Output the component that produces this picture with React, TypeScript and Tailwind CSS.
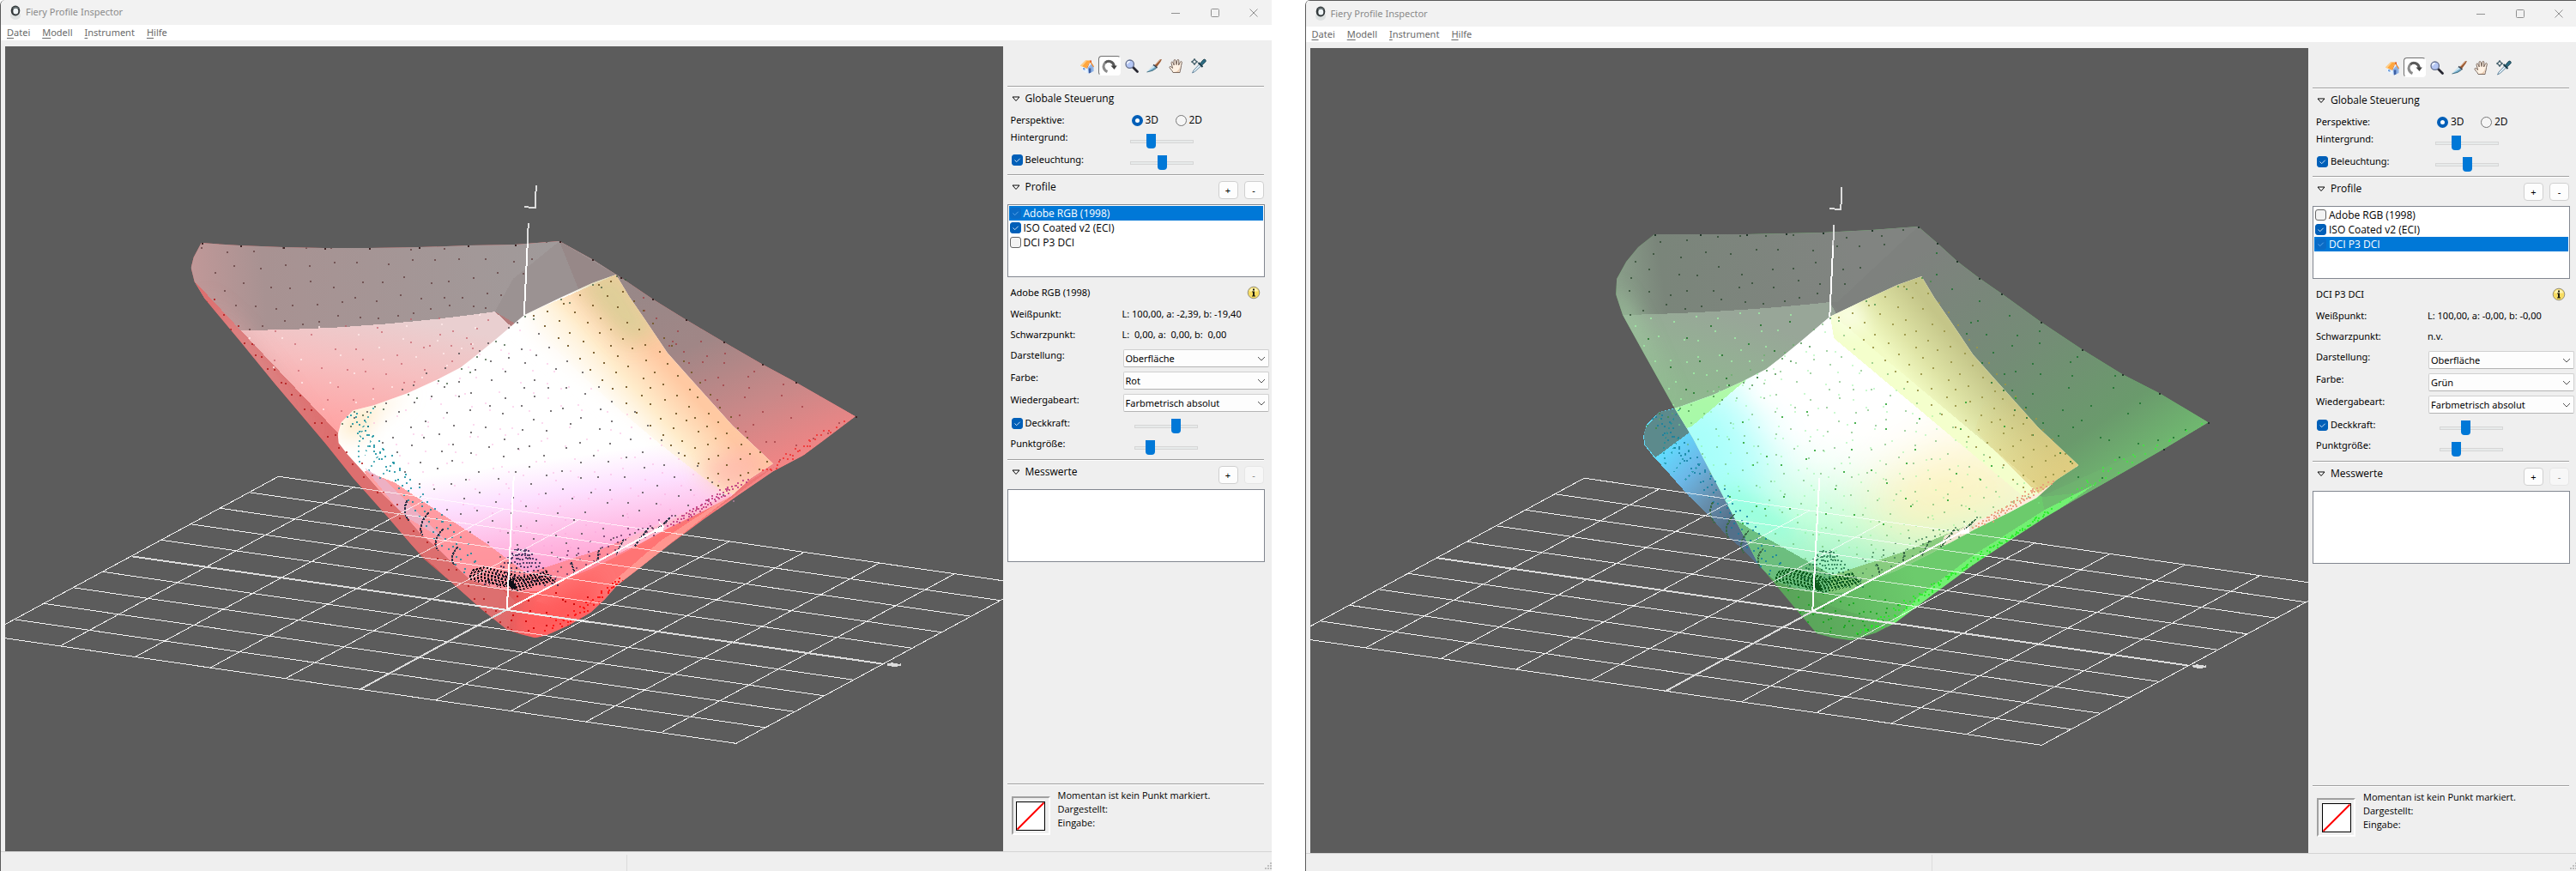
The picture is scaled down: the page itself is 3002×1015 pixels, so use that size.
import React, { useId, useState } from "react";

type Pt = [number, number];

/* ---------- geometry helpers for the 3D view ---------- */

const noise = (n: number) => {
  const s = Math.sin(n * 127.1 + 11.7) * 43758.5453;
  return s - Math.floor(s);
};

const toPath = (pts: Pt[]) => "M" + pts.map((p) => p.join(" ")).join("L") + "Z";

/* Sample points laid over a four-cornered patch (a, b along the top, d, c along the bottom). */
const patch = (a: Pt, b: Pt, c: Pt, d: Pt, nu: number, nv: number, jitter: number, seed: number): Pt[] => {
  const out: Pt[] = [];
  for (let i = 0; i <= nu; i++) {
    for (let j = 0; j <= nv; j++) {
      const u = i / nu;
      const v = j / nv;
      const k = seed + i * 31 + j * 7;
      const x = (1 - v) * ((1 - u) * a[0] + u * b[0]) + v * ((1 - u) * d[0] + u * c[0]);
      const y = (1 - v) * ((1 - u) * a[1] + u * b[1]) + v * ((1 - u) * d[1] + u * c[1]);
      out.push([Math.round(x + (noise(k) - 0.5) * jitter), Math.round(y + (noise(k + 0.5) - 0.5) * jitter)]);
    }
  }
  return out;
};

const dotPath = (pts: Pt[]) => pts.map(([x, y]) => `M${x} ${y}h2v2h-2z`).join("");

const Dots = ({ pts, fill, opacity = 1 }: { pts: Pt[]; fill: string; opacity?: number }) => (
  <path d={dotPath(pts)} fill={fill} opacity={opacity} />
);

const ISO: Pt[] = [
  [611, 367], [653, 347], [690, 330], [718, 320], [733, 345], [749, 368], [778, 411], [802, 438], [854, 496],
  [901, 540], [875, 557], [852, 578], [820, 595], [781, 614], [730, 642], [690, 662], [655, 676], [630, 688],
  [608, 689], [575, 684], [548, 675], [532, 660], [510, 638], [492, 623], [472, 600], [447, 576], [425, 551],
  [405, 529], [395, 516], [394, 506], [398, 492], [412, 478], [436, 472], [475, 458], [510, 442], [537, 428],
  [555, 414], [577, 396],
];

const ADOBE: Pt[] = [
  [235, 283], [280, 286], [330, 288], [378, 289], [430, 289], [488, 288], [545, 286], [600, 285], [652, 281],
  [690, 302], [723, 323], [760, 348], [799, 372], [843, 398], [888, 424], [927, 445], [997, 485], [960, 513],
  [937, 530], [901, 549], [860, 577], [820, 605], [781, 634], [745, 662], [719, 682], [705, 698], [689, 713],
  [664, 728], [637, 740], [624, 743], [608, 739], [592, 734], [563, 711], [527, 679], [493, 650], [452, 602],
  [412, 557], [380, 517], [320, 446], [280, 397], [239, 348], [227, 328], [223, 312], [226, 300],
];

const DCI: Pt[] = [
  [407, 271], [460, 271], [514, 271], [560, 270], [603, 269], [660, 266], [714, 262], [736, 281], [759, 302],
  [785, 322], [811, 340], [857, 373], [905, 405], [952, 434], [995, 456], [1052, 490], [1000, 521], [934, 559],
  [897, 580], [863, 600], [820, 628], [778, 656], [732, 690], [688, 723], [665, 735], [636, 744], [615, 741],
  [596, 736], [572, 708], [528, 655], [490, 582], [452, 509], [429, 471], [396, 412], [370, 365], [362, 341],
  [363, 323], [374, 303], [388, 286],
];

const isoWhite = patch([606, 376], [846, 572], [612, 676], [412, 486], 13, 11, 10, 3);
const isoSide = patch([620, 368], [714, 324], [896, 538], [838, 566], 5, 16, 6, 90);
const isoSoft = patch([600, 392], [846, 580], [640, 662], [440, 500], 14, 9, 18, 410);
const isoRim = patch([404, 486], [416, 484], [556, 650], [538, 666], 3, 22, 6, 55);
const isoHalo = patch([600, 640], [614, 640], [650, 680], [565, 680], 11, 8, 2, 5);
const isoEdge = patch([848, 566], [872, 558], [800, 604], [776, 612], 3, 16, 3, 17);
const isoLow = patch([650, 645], [780, 600], [760, 620], [650, 674], 10, 3, 7, 44);
const isoOutline = ISO.slice(0, 4)
  .concat(ISO.slice(30))
  .flatMap(([x, y], i): Pt[] => [[x, y + 1], [x + 10, y + 4 + (i % 2)]]);

/* Dense strands of near-black samples around the black point. */
const strands: string[] = [];
for (let i = 0; i < 13; i++) {
  const x = 549 + i * 4;
  const top = 660 + Math.abs(i - 3) * 1;
  strands.push(`M${x + 4} ${top}Q${x - 3} ${top + 8} ${x + 1 + i / 3} ${676 + i}`);
}
for (let i = 0; i < 12; i++) {
  strands.push(`M${594 + i * 4} ${674 - Math.round(i * 0.8)}Q${602 + i * 3} ${678 - i} ${603 + i * 4} ${689 - i}`);
}
const longStrands = [
  "M475 583Q468 596 477 607", "M500 597Q486 612 493 624", "M517 616Q503 630 511 642", "M534 637Q523 648 530 659",
  "M727 628L718 646", "M756 615L740 636", "M698 641L696 657", "M666 655L670 668", "M781 603L763 620",
];
const looseStrands = ["M460 538L442 558", "M447 522L430 548", "M435 508L425 530", "M436 475Q412 510 420 540"];

const gridLines: string[] = [];
for (let i = 0; i <= 10; i++) {
  gridLines.push(`M${325 + 87.5 * i} ${555 + 12.6 * i}l-342 185`);
  gridLines.push(`M${325 - 34.2 * i} ${555 + 18.5 * i}l875 126`);
}

const IsoDots = ({ green }: { green: boolean }) => {
  const dark = green ? "#0c5a1c" : "#101018";
  return (
    <g>
      <Dots pts={isoSoft} fill={green ? "#7ef08a" : "#f8a0d8"} opacity={0.4} />
      <Dots pts={isoWhite} fill={green ? "#5fae60" : "#4f4a4c"} opacity={green ? 0.55 : 0.75} />
      <Dots pts={isoSide} fill={green ? "#9a9648" : "#745828"} opacity={0.9} />
      <Dots pts={isoRim} fill={green ? "#1180a0" : "#0a8a9c"} opacity={0.8} />
      <Dots pts={isoOutline} fill={green ? "#3c8a40" : "#3c5a3c"} opacity={0.7} />
      <Dots pts={isoEdge} fill={green ? "#e89a78" : "#c03a80"} opacity={0.85} />
      <Dots pts={isoLow} fill={green ? "#3a7a50" : "#5a2a58"} opacity={0.7} />
      <Dots pts={isoHalo} fill={green ? "#1d7048" : "#1d1d48"} opacity={0.75} />
      <path d={looseStrands.join("")} fill="none" stroke="#12909c" strokeOpacity="0.7" strokeWidth="2" strokeDasharray="2 4" />
      <path d={longStrands.join("")} fill="none" stroke={green ? "#3a6a48" : "#2c3448"} strokeWidth="2" strokeDasharray="3 1" />
      <path d={strands.join("")} fill="none" stroke={dark} strokeWidth="2" strokeDasharray="3 1" />
      <path d="M592 674l6 4 6 8-6 0-6-5z" fill={dark} />
    </g>
  );
};

const Blur = ({ id }: { id: string }) => (
  <>
    <filter id={id + "soft"} x="-50%" y="-50%" width="200%" height="200%"><feGaussianBlur stdDeviation="12" /></filter>
    <filter id={id + "wide"} x="-60%" y="-60%" width="220%" height="220%"><feGaussianBlur stdDeviation="34" /></filter>
  </>
);

const RedScene = ({ id }: { id: string }) => (
  <>
    <defs>
      <clipPath id={id + "out"}><path d={toPath(ADOBE)} /></clipPath>
      <clipPath id={id + "iso"}><path d={toPath(ISO)} /></clipPath>
      <Blur id={id} />
      <linearGradient id={id + "top"} gradientUnits="userSpaceOnUse" x1="225" y1="330" x2="640" y2="300">
        <stop offset="0" stopColor="#c09898" /><stop offset="0.2" stopColor="#a89292" /><stop offset="1" stopColor="#a09a9a" />
      </linearGradient>
      <linearGradient id={id + "front"} gradientUnits="userSpaceOnUse" x1="430" y1="365" x2="405" y2="500">
        <stop offset="0" stopColor="#e9cfd0" /><stop offset="0.45" stopColor="#f6bfc0" /><stop offset="1" stopColor="#ffa4a4" />
      </linearGradient>
      <linearGradient id={id + "side"} gradientUnits="userSpaceOnUse" x1="740" y1="320" x2="850" y2="590">
        <stop offset="0" stopColor="#978888" /><stop offset="0.35" stopColor="#a08686" /><stop offset="0.65" stopColor="#c88888" /><stop offset="1" stopColor="#fc8484" />
      </linearGradient>
      <linearGradient id={id + "bot"} gradientUnits="userSpaceOnUse" x1="540" y1="690" x2="650" y2="690">
        <stop offset="0" stopColor="#cf5c5c" /><stop offset="0.5" stopColor="#dc6060" /><stop offset="0.8" stopColor="#ff6a6a" /><stop offset="1" stopColor="#ff7878" />
      </linearGradient>
      <linearGradient id={id + "body"} gradientUnits="userSpaceOnUse" x1="600" y1="500" x2="625" y2="680">
        <stop offset="0" stopColor="#ffffff" /><stop offset="0.22" stopColor="#ffffff" /><stop offset="0.45" stopColor="#fde0ff" />
        <stop offset="0.72" stopColor="#ffbbe4" /><stop offset="1" stopColor="#ff9acb" />
      </linearGradient>
      <linearGradient id={id + "warm"} gradientUnits="userSpaceOnUse" x1="700" y1="476" x2="768" y2="416">
        <stop offset="0" stopColor="#fffdf2" stopOpacity="0" /><stop offset="0.5" stopColor="#ffeccb" /><stop offset="1" stopColor="#ffc9a2" />
      </linearGradient>
    </defs>
    <g clipPath={`url(#${id}out)`}>
      <rect x="200" y="260" width="820" height="500" fill={`url(#${id}bot)`} />
      <path d="M220 260L660 260L723 323L640 400L577 363Q430 386 281 385L239 348L220 340Z" fill={`url(#${id}top)`} />
      <path d="M281 385Q430 384 577 363L612 395L640 520L386 520Z" fill={`url(#${id}front)`} />
      <path d="M652 281L598 325L577 363L612 395L700 400L740 330Z" fill="#988e8e" opacity="0.6" />
      <path d="M652 281L723 323L997 485L937 530L840 600L700 400Z" fill={`url(#${id}side)`} />
      <path d="M220 320L281 385L390 500L600 700L592 740L400 560L230 360Z" fill="#dd6f6f" />
      <path d="M235 340L281 385L330 450L380 517L300 430Z" fill="#dba6a6" filter={`url(#${id}soft)`} opacity="0.9" />
      <path d="M905 542L850 582L781 630L700 705L712 690L781 618L850 574Z" fill="#ee7676" />
      <path d="M852 578L781 618L655 682L625 700L700 725L716 690L760 646Z" fill="#ff7474" />
      <path d="M860 572L780 634L719 684L712 680L770 630L840 584Z" fill="#ff9e96" opacity="0.8" />
      <path d="M600 715L700 670L690 720L640 745L600 740Z" fill="#ff5a5a" filter={`url(#${id}soft)`} />
    </g>
    <g clipPath={`url(#${id}iso)`}>
      <rect x="390" y="310" width="520" height="390" fill={`url(#${id}body)`} />
      <path d="M611 367L640 350L800 440L901 540L852 580L760 500L640 400Z" fill="#fff8ee" filter={`url(#${id}soft)`} />
      <path d="M611 367L718 320L910 540L852 580Q700 470 611 367Z" fill={`url(#${id}warm)`} />
      <path d="M670 330L720 310L770 390L730 400Z" fill="#dccf98" filter={`url(#${id}soft)`} opacity="0.95" />
      <path d="M870 520L901 540L852 580L810 545Z" fill="#ffb4ac" opacity="0.7" filter={`url(#${id}soft)`} />
      <path d="M390 505L412 478L480 456L440 480L420 510Z" fill="#ffe6bc" filter={`url(#${id}soft)`} />
      <path d="M425 548L460 562L570 635L614 668L655 676L608 700L540 690L440 590Z" fill="#ff8f92" opacity="0.85" />
      <path d="M425 545L450 560L520 630L470 600Z" fill="#e8b4cc" opacity="0.8" />
      <path d="M614 668L700 640L781 606L852 576L852 590L781 620L655 682L608 695Z" fill="#ff8792" opacity="0.85" />
      <path d="M725 630L781 604L852 574L858 580L790 614L720 645Z" fill="#ffc4dc" opacity="0.8" />
    </g>
    <g clipPath={`url(#${id}out)`}>
      <Dots pts={patch([232, 290], [640, 284], [570, 356], [285, 380], 13, 4, 10, 1)} fill="#5e3a3a" opacity={0.7} />
      <Dots pts={patch([285, 392], [560, 372], [540, 400], [400, 480], 7, 4, 20, 8)} fill="#c25560" opacity={0.6} />
      <Dots pts={patch([285, 392], [560, 372], [540, 410], [380, 480], 6, 3, 14, 77)} fill="#ffe8e8" opacity={0.8} />
      <Dots pts={patch([745, 345], [985, 484], [905, 540], [785, 405], 7, 4, 16, 28)} fill="#a03a40" opacity={0.7} />
      <Dots pts={patch([940, 512], [985, 489], [905, 545], [890, 548], 5, 4, 6, 28)} fill="#f03030" opacity={0.8} />
      <Dots pts={patch([240, 352], [248, 350], [590, 728], [580, 726], 1, 24, 5, 62)} fill="#b01818" opacity={0.8} />
      <Dots pts={patch([720, 676], [726, 674], [664, 728], [635, 735], 3, 12, 6, 12)} fill="#ff1818" />
      <Dots pts={patch([600, 700], [680, 690], [650, 738], [600, 732], 4, 3, 14, 33)} fill="#d00808" />
    </g>
    <IsoDots green={false} />
    <Dots pts={ADOBE.slice(0, 17)} fill="#3e2424" />
  </>
);

const GreenScene = ({ id }: { id: string }) => (
  <>
    <defs>
      <clipPath id={id + "out"}><path d={toPath(DCI)} /></clipPath>
      <clipPath id={id + "iso"}><path d={toPath(ISO)} /></clipPath>
      <Blur id={id} />
      <linearGradient id={id + "top"} gradientUnits="userSpaceOnUse" x1="362" y1="340" x2="640" y2="300">
        <stop offset="0" stopColor="#8ba08b" /><stop offset="0.2" stopColor="#7a857a" /><stop offset="1" stopColor="#818481" />
      </linearGradient>
      <linearGradient id={id + "front"} gradientUnits="userSpaceOnUse" x1="480" y1="360" x2="440" y2="490">
        <stop offset="0" stopColor="#98a698" /><stop offset="0.4" stopColor="#94b094" /><stop offset="1" stopColor="#8cbc8c" />
      </linearGradient>
      <linearGradient id={id + "side"} gradientUnits="userSpaceOnUse" x1="720" y1="290" x2="920" y2="580">
        <stop offset="0" stopColor="#7e817e" /><stop offset="0.45" stopColor="#748c76" /><stop offset="0.8" stopColor="#6a9a6c" /><stop offset="1" stopColor="#70b870" />
      </linearGradient>
      <linearGradient id={id + "bot"} gradientUnits="userSpaceOnUse" x1="560" y1="690" x2="700" y2="640">
        <stop offset="0" stopColor="#5aa45a" /><stop offset="0.5" stopColor="#64bc64" /><stop offset="1" stopColor="#6ccb6c" />
      </linearGradient>
      <linearGradient id={id + "blue"} gradientUnits="userSpaceOnUse" x1="415" y1="525" x2="500" y2="600">
        <stop offset="0" stopColor="#62dcff" /><stop offset="0.35" stopColor="#6cb8e8" /><stop offset="0.7" stopColor="#668eac" /><stop offset="1" stopColor="#54708a" />
      </linearGradient>
      <linearGradient id={id + "body"} gradientUnits="userSpaceOnUse" x1="600" y1="500" x2="590" y2="675">
        <stop offset="0" stopColor="#ffffff" /><stop offset="0.2" stopColor="#f0fff8" /><stop offset="0.6" stopColor="#c4ffdc" /><stop offset="1" stopColor="#98eebc" />
      </linearGradient>
      <linearGradient id={id + "olive"} gradientUnits="userSpaceOnUse" x1="718" y1="460" x2="775" y2="412">
        <stop offset="0" stopColor="#f2fbc4" /><stop offset="0.4" stopColor="#dfe4a6" /><stop offset="1" stopColor="#c4c588" />
      </linearGradient>
      <linearGradient id={id + "gold"} gradientUnits="userSpaceOnUse" x1="800" y1="450" x2="900" y2="550">
        <stop offset="0" stopColor="#e0cf80" stopOpacity="0" /><stop offset="1" stopColor="#e2cd80" />
      </linearGradient>
    </defs>
    <path d={toPath(ISO)} fill={`url(#${id}blue)`} />
    <path d="M412 478L394 500L396 516L408 531L450 500L440 472Z" fill="#5c8a8c" clipPath={`url(#${id}iso)`} />
    <g clipPath={`url(#${id}out)`}>
      <rect x="350" y="250" width="720" height="510" fill={`url(#${id}bot)`} />
      <path d="M350 260L714 262L740 300L611 368L611 350Q500 362 370 365L350 365Z" fill={`url(#${id}top)`} />
      <path d="M370 365Q500 362 611 350L640 400L620 500L429 490Z" fill={`url(#${id}front)`} />
      <path d="M362 330L385 370L440 490L400 420L365 365Z" fill="#a4d4a4" filter={`url(#${id}soft)`} opacity="0.8" />
      <path d="M714 262L620 350L611 350L858 577L920 570L1052 490Z" fill={`url(#${id}side)`} />
      <path d="M858 576L1052 488L934 562L863 604Z" fill="#70b670" opacity="0.6" />
      <path d="M920 562L863 602L778 660L688 727L670 736L716 692L778 645L863 591Z" fill="#72f072" />
      <path d="M500 600L600 700L690 728L636 746L596 740Z" fill="#5aa45a" opacity="0.5" />
      <g clipPath={`url(#${id}iso)`}>
        <rect x="390" y="310" width="520" height="390" fill={`url(#${id}body)`} />
        <path d="M720 480L900 560L850 600L700 640L640 590Z" fill="#fff2bc" filter={`url(#${id}wide)`} opacity="0.9" />
        <path d="M400 470L470 440L500 480L520 560L500 620L430 560Z" fill="#8cfff4" filter={`url(#${id}wide)`} />
        <path d="M440 480L500 470L540 560L480 580Z" fill="#b0ffff" filter={`url(#${id}wide)`} />
        <path d="M611 360L540 420L560 480L640 540L760 510L800 530L700 400Z" fill="#ffffff" filter={`url(#${id}wide)`} />
        <path d="M611 360L530 430L520 460L600 480L700 450Z" fill="#ffffff" filter={`url(#${id}soft)`} />
        <path d="M484 580L500 600L580 640L560 600L490 560Z" fill="#84ffd8" opacity="0.7" filter={`url(#${id}soft)`} />
        <path d="M412 478L475 458L555 414L520 435L450 495L436 500Z" fill="#a6f894" opacity="0.8" />
        <path d="M611 352L614 372L848 574L875 565L901 540L718 320Z" fill={`url(#${id}olive)`} />
        <path d="M611 362L616 392L836 576L862 572Z" fill="#f4ffcc" />
        <path d="M800 430L901 540L858 577L780 500Z" fill={`url(#${id}gold)`} />
        <path d="M611 355L645 348L650 385L620 375Z" fill="#ffffff" opacity="0.7" filter={`url(#${id}soft)`} />
        <path d="M480 590L520 615L614 668L655 676L608 700L540 690Z" fill="#5eb06c" opacity="0.8" />
        <path d="M614 668L700 640L781 606L781 620L655 682L608 695Z" fill="#84c878" opacity="0.9" />
        <path d="M745 622L781 606L852 574L901 540L880 560L790 614L740 635Z" fill="#ffeade" opacity="0.85" />
      </g>
      <Dots pts={patch([380, 276], [700, 268], [600, 342], [372, 360], 10, 4, 12, 1)} fill="#2e4a30" opacity={0.75} />
      <Dots pts={patch([378, 372], [560, 364], [520, 430], [430, 470], 7, 4, 12, 8)} fill="#a0f8a8" opacity={0.7} />
      <Dots pts={patch([400, 400], [560, 368], [520, 430], [440, 460], 4, 2, 20, 19)} fill="#1c7024" opacity={0.8} />
      <Dots pts={patch([730, 290], [1035, 488], [900, 560], [800, 440], 7, 6, 20, 28)} fill="#16702a" opacity={0.75} />
      <Dots pts={patch([930, 540], [1040, 492], [930, 556], [880, 580], 7, 3, 10, 128)} fill="#40e840" opacity={0.8} />
      <Dots pts={patch([860, 598], [868, 592], [650, 738], [640, 736], 3, 34, 6, 62)} fill="#22ee22" opacity={0.8} />
      <Dots pts={patch([560, 690], [690, 700], [660, 730], [600, 732], 7, 4, 12, 33)} fill="#10a818" opacity={0.8} />
      <Dots pts={patch([450, 500], [820, 470], [760, 600], [500, 600], 8, 4, 30, 333)} fill="#20a028" opacity={0.8} />
    </g>
    <IsoDots green />
    <Dots pts={DCI.slice(0, 17)} fill="#22382a" />
  </>
);

const Viewport = ({ variant }: { variant: "red" | "green" }) => {
  const id = useId().replace(/[^a-zA-Z0-9]/g, "");
  return (
    <svg
      className="block h-full w-full bg-[#5c5c5c]"
      viewBox="6 54 1163 938"
      preserveAspectRatio="xMidYMid slice"
      shapeRendering="crispEdges"
      role="img"
      aria-label="3D-Ansicht"
    >
      <path d={gridLines.join("")} fill="none" stroke="#d6d6d6" strokeWidth="1" />
      {variant === "red" ? <RedScene id={id} /> : <GreenScene id={id} />}
      <path d={gridLines.join("")} fill="none" stroke="#ffffff" strokeOpacity="0.7" strokeWidth="1" />
      <path d="M154 648L1027 773" fill="none" stroke="#dcdcdc" strokeWidth="2" />
      <path d="M591 710L420 803" fill="none" stroke="#dcdcdc" strokeWidth="2" />
      <path d="M553 705L688 725" fill="none" stroke="#ffffff" strokeWidth="2" strokeOpacity="0.5" />
      <path d="M591 710L772 614" fill="none" stroke="#ffffff" strokeWidth="2" />
      <path d="M591 710L599 555" fill="none" stroke="#ffffff" strokeWidth="2" />
      <path d="M611 367L615 284" fill="none" stroke="#ffffff" strokeWidth="2" />
      <path d="M615 284L616 260M625 216L624 243M624 242L611 241" fill="none" stroke="#dcdcdc" strokeWidth="2" />
      <path d="M763 617l10-4v5l-8 2zM768 608l6 6" fill="#ffffff" stroke="#ffffff" />
      <path d="M1034 773h3l1-1h3v1h5l2 1h1v-1h1v2l-2 1h-2l-1 1h-6v-1h-3l-2-1z" fill="#dcdcdc" />
    </svg>
  );
};

/* ---------- icons ---------- */

const HomeIcon = () => (
  <svg viewBox="0 0 18 18" className="size-[18px]">
    <path d="M3 8.500L9.500 5L16 9v6l-5 2.500L3 13.500z" fill="#dcecff" />
    <path d="M9.500 11L14 6.500L16.500 10v5L11 17.500z" fill="#8fb2e4" />
    <path d="M3 9v4.500l5.500 3.500v-5z" fill="#eef6ff" />
    <path d="M10.800 11.500h2.600v5l-2.600 1z" fill="#3d5fa4" />
    <path d="M4 11h2.500v3l-2.500-1z" fill="#7ca6dc" />
    <path d="M12 2.500h2V6l-2-1.500z" fill="#d4442c" />
    <path d="M1 8.500L7 2.500L12.500 2.500L8 11.500z" fill="#ffa63c" />
    <path d="M1 8.500L7 2.500l1.500.4L3 9.500z" fill="#ffd08a" />
    <path d="M12.500 2.500L17 9.500l-1 .8-3.700-6L9 12l-1-.5z" fill="#ef8424" />
  </svg>
);
const RotateIcon = () => (
  <svg viewBox="0 0 18 18" className="size-[18px]">
    <path d="M6.500 15.500C1.500 13.500.8 8 4 5C7.500 1.800 13.500 3.500 14.300 9" fill="none" stroke="#8b8b8b" strokeWidth="3" />
    <path d="M4 5C7.500 1.800 13.500 3.500 14.300 9" fill="none" stroke="#5a5a5a" strokeWidth="2.600" />
    <path d="M10.500 8.500h7.300l-3.300 4.500z" fill="#444" />
  </svg>
);
const LensIcon = () => (
  <svg viewBox="0 0 18 18" className="size-[18px]">
    <path d="M10 10l5.500 5.500" stroke="#262630" strokeWidth="2.800" strokeLinecap="round" />
    <circle cx="6.700" cy="6.700" r="4.700" fill="#b4c6f4" stroke="#65708e" strokeWidth="1.300" />
    <path d="M3.800 6.500a3 3 0 0 1 3-2.700" stroke="#f4f8ff" strokeWidth="1.600" fill="none" />
  </svg>
);
const KnifeIcon = () => (
  <svg viewBox="0 0 18 18" className="size-[18px]">
    <path d="M9.500 8L15.500 1.500L18 1L16.500 4L12 10z" fill="#9a5a34" />
    <path d="M10.500 7.500L16 2" stroke="#d49a70" strokeWidth="1" />
    <path d="M8 7.500l4.500 3.500" stroke="#3c4450" strokeWidth="1.600" />
    <path d="M8 8.500L11.500 11.500Q8 15 .5 16z" fill="#6fa9c8" />
    <path d="M8 8.500L10 10L.5 16z" fill="#cfe8f4" />
    <path d="M11.500 11.500Q8 15 .5 16" stroke="#38606f" strokeWidth=".8" fill="none" />
  </svg>
);
const HandIcon = () => (
  <svg viewBox="0 0 18 18" className="size-[18px]">
    <path
      d="M5 16.500C4 14 2 12.500 1 10.800c-.6-1.300 1-1.800 2-.8l1.600 1.500L3 5.500c-.3-1.600 1.500-2 2-.5l1.200 3L6 2.800c0-1.700 2-1.700 2.200 0L9 7.500l.8-5c.3-1.600 2.200-1.400 2 .3L11.600 8l1.800-3.700c.8-1.400 2.400-.6 1.900.8-.9 2.700-.8 4.400-1.300 6.900-.3 1.700-1 2.700-1 4.500z"
      fill="#fff2e4" stroke="#6d5a50" strokeWidth=".9"
    />
    <path d="M13 9q.5 4-1.500 7H6q3 .2 5-2t2-5z" fill="#e8c8ac" />
  </svg>
);
const PipetteIcon = () => (
  <svg viewBox="0 0 18 18" className="size-[18px]">
    <path d="M10 6.500L3 14l-1.500 3L4.500 15.500L12 8.500z" fill="#dff0fa" stroke="#5d7f96" strokeWidth=".9" />
    <path d="M8.500 5L13.500 10" stroke="#1c3c4a" strokeWidth="2" />
    <path d="M10.500 6L14 1.800Q16 .2 17 1.800T16.500 4.500L12.500 8.300z" fill="#2d6c82" stroke="#163642" strokeWidth=".7" />
    <circle cx="4" cy="4" r="2.300" fill="none" stroke="#1c3f4c" strokeWidth="1" />
    <path d="M4 0v2.500M4 5.500V8M0 4h2.500M5.500 4H8" stroke="#1c3f4c" strokeWidth="1" />
  </svg>
);
const AppIcon = () => (
  <svg viewBox="0 0 16 18" className="h-[18px] w-4">
    <ellipse cx="8" cy="12" rx="6" ry="5" fill="#dde1e1" />
    <ellipse cx="8" cy="6.500" rx="5.300" ry="6" fill="#343a3c" />
    <ellipse cx="8.300" cy="7" rx="3" ry="3.500" fill="#eef4f6" />
    <path d="M5 4q3-3 6.500 0" stroke="#6f7a7c" strokeWidth="1.200" fill="none" />
  </svg>
);
const InfoIcon = () => (
  <svg viewBox="0 0 16 16" className="size-4">
    <circle cx="8" cy="8" r="6.800" fill="#f7dc62" stroke="#96917c" />
    <path d="M3 6.500a5 4 0 0 1 10 0" fill="#fff3b4" />
    <path d="M7 3.500h2v2H7zM6 6.500h3v5h1v1H6v-1h1v-4H6z" fill="#1c1c10" />
  </svg>
);

/* ---------- controls ---------- */

const Check = ({ id, checked, selected = false }: { id: string; checked: boolean; selected?: boolean }) => (
  <span className="grid size-[13px] shrink-0 place-items-center">
    <input
      id={id}
      type="checkbox"
      defaultChecked={checked}
      className={
        "peer col-start-1 row-start-1 size-[13px] appearance-none rounded-[3px] border bg-[#f3f3f3] " +
        (selected
          ? "border-[#0a6bc6] checked:bg-[#0a6bc6]"
          : "border-[#666] checked:border-[#005fb8] checked:bg-[#005fb8]")
      }
    />
    <svg viewBox="0 0 13 13" className="pointer-events-none col-start-1 row-start-1 hidden size-[13px] peer-checked:block">
      <path d="M3.500 6.500l2.200 2.200l4-4" fill="none" stroke={selected ? "#5aa6ea" : "#cfe3f6"} strokeWidth="1" />
    </svg>
  </span>
);

const Slider = ({ id, label, value }: { id: string; label?: string; value: number }) => (
  <input
    id={id}
    type="range"
    aria-label={label}
    defaultValue={value}
    className="mt-[6px] block h-[17px] w-[74px] appearance-none bg-transparent [&::-webkit-slider-runnable-track]:h-1 [&::-webkit-slider-runnable-track]:border [&::-webkit-slider-runnable-track]:border-[#d6d6d6] [&::-webkit-slider-runnable-track]:bg-[#e7eaea] [&::-webkit-slider-thumb]:mt-[-8px] [&::-webkit-slider-thumb]:h-[17px] [&::-webkit-slider-thumb]:w-[11px] [&::-webkit-slider-thumb]:appearance-none [&::-webkit-slider-thumb]:rounded-b-[4px] [&::-webkit-slider-thumb]:bg-[#0078d7]"
  />
);

const Radio = ({ id, name, checked, children }: { id: string; name: string; checked: boolean; children: string }) => (
  <span className="flex w-[51px] items-center gap-[3px]">
    <input
      id={id}
      type="radio"
      name={name}
      defaultChecked={checked}
      className="size-[13px] appearance-none rounded-full border border-[#777] bg-[#f6f6f6] checked:border-4 checked:border-[#005fb8] checked:bg-white"
    />
    <label htmlFor={id} className="font-['Open_Sans',sans-serif] text-[12px] leading-5">{children}</label>
  </span>
);

const SmallButton = ({ label, disabled = false, children }: { label: string; disabled?: boolean; children: string }) => (
  <button
    type="button"
    aria-label={label}
    disabled={disabled}
    className="h-[21px] w-[23px] rounded-[4px] border border-[#d0d0d0] bg-[#fdfdfd] text-[11px] leading-[19px] disabled:border-[#e6e6e6] disabled:bg-[#f7f7f7] disabled:text-[#888]"
  >
    {children}
  </button>
);

const Rule = () => <div className="h-[2px] border-t border-[#a0a0a0] bg-white" />;

const SectionHeader = ({ title, children }: { title: string; children?: React.ReactNode }) => (
  <div className="flex items-start pl-[5px]">
    <h2 className="flex-1 font-['Open_Sans',sans-serif] text-[12px] leading-[26px] font-normal">
      <button type="button" className="flex items-center gap-[6px]">
        <svg viewBox="0 0 10 7" className="h-[7px] w-[10px]">
          <path d="M1 1h8L5 5.500z" fill="#fff" stroke="#000" />
        </svg>
        {title}
      </button>
    </h2>
    {children && <div className="mt-[6px] mb-[6px] flex gap-[7px]">{children}</div>}
  </div>
);

const ComboRow = ({ id, label, value, options }: { id: string; label: string; value: string; options: string[] }) => (
  <div className="flex h-[26px] items-start">
    <label htmlFor={id} className="w-[135px] shrink-0 pl-1 leading-6">{label}</label>
    <span className="relative mt-[5px] -mr-[6px] flex-1">
      <select
        id={id}
        defaultValue={value}
        className="block h-[21px] w-full appearance-none rounded-[2px] border border-[#d0d0d0] border-b-[#b4b4b4] bg-[#fdfdfd] pl-[2px] text-[11px] leading-[19px]"
      >
        {options.map((o) => (
          <option key={o}>{o}</option>
        ))}
      </select>
      <svg viewBox="0 0 10 6" className="pointer-events-none absolute top-[8px] right-1 h-[6px] w-[10px]">
        <path d="M1 1l4 4l4-4" fill="none" stroke="#555" />
      </svg>
    </span>
  </div>
);

/* ---------- window ---------- */

interface WindowProps {
  variant: "red" | "green";
  profiles: { name: string; checked: boolean }[];
  selected: string;
  white: string;
  black: string;
  color: string;
  opacity: number;
}

const tools = [
  { name: "Ausgangsansicht", icon: <HomeIcon /> },
  { name: "Drehen", icon: <RotateIcon /> },
  { name: "Zoomen", icon: <LensIcon /> },
  { name: "Schneiden", icon: <KnifeIcon /> },
  { name: "Verschieben", icon: <HandIcon /> },
  { name: "Pipette", icon: <PipetteIcon /> },
];

const InspectorWindow = ({ variant, profiles, selected, white, black, color, opacity }: WindowProps) => {
  const uid = useId();
  const [tool, setTool] = useState("Drehen");
  return (
    <section className="flex min-h-full flex-col overflow-hidden rounded-tl-[6px] border-l border-[#5a5a5a] bg-[#efefef] font-['Noto_Sans',sans-serif] text-[11px] text-black">
      <header className={"flex items-center bg-[#f2f2f2] pl-[9px] " + (variant === "red" ? "h-[29px]" : "h-[31px] border-t border-[#5a5a5a]")}>
        <AppIcon />
        <h1 className="ml-1 flex-1 text-[11px] font-normal text-[#8a8a8a]">Fiery Profile Inspector</h1>
        <button type="button" aria-label="Minimieren" className="grid h-full w-11 place-items-center">
          <svg viewBox="0 0 10 10" className="size-[10px]"><path d="M0 5.500h10" stroke="#909090" /></svg>
        </button>
        <button type="button" aria-label="Maximieren" className="grid h-full w-12 place-items-center">
          <svg viewBox="0 0 10 10" className="size-[10px]"><rect x=".5" y=".5" width="9" height="9" rx="1" fill="none" stroke="#909090" /></svg>
        </button>
        <button type="button" aria-label="Schließen" className="grid h-full w-[42px] place-items-center">
          <svg viewBox="0 0 10 10" className="size-[10px]"><path d="M.5.5l9 9M9.500.5l-9 9" stroke="#909090" /></svg>
        </button>
      </header>

      <nav className="flex h-[18px] items-center gap-[14px] bg-white pl-[7px] text-[11px] leading-[18px] text-[#6a6a6a]">
        {["Datei", "Modell", "Instrument", "Hilfe"].map((m) => (
          <button key={m} type="button">
            <span className="underline underline-offset-2">{m[0]}</span>
            {m.slice(1)}
          </button>
        ))}
      </nav>

      <div className="flex flex-1">
        <main className="relative min-w-0 flex-1 pt-[7px] pl-[5px]">
          <Viewport variant={variant} />
        </main>

        <aside className="flex w-[313px] shrink-0 flex-col pr-[9px] pl-[5px]">
          <div className="flex pt-[18px] pb-3 pl-[80px]">
            {tools.map((t) => (
              <button
                key={t.name}
                type="button"
                aria-label={t.name}
                aria-pressed={tool === t.name}
                onClick={() => setTool(t.name)}
                className={
                  "grid h-[23px] w-[26px] place-items-center rounded-[4px] border " +
                  (tool === t.name ? "border-t-[#707070] border-r-white border-b-white border-l-[#707070] bg-white" : "border-transparent")
                }
              >
                {t.icon}
              </button>
            ))}
          </div>

          <Rule />
          <SectionHeader title="Globale Steuerung" />
          <div className="mt-0.5 flex h-5 items-center" role="radiogroup" aria-label="Perspektive">
            <span className="w-[145px] pl-1 leading-5">Perspektive:</span>
            <Radio id={uid + "3d"} name={uid + "view"} checked>3D</Radio>
            <Radio id={uid + "2d"} name={uid + "view"} checked={false}>2D</Radio>
          </div>
          <div className="flex h-[25px] items-start">
            <label htmlFor={uid + "bg"} className="w-[143px] pl-1 leading-5">Hintergrund:</label>
            <Slider id={uid + "bg"} value={30} />
          </div>
          <div className="mb-[3px] flex h-[25px] items-start">
            <span className="flex h-[22px] w-[143px] items-center gap-[3px] pl-[5px]">
              <Check id={uid + "light"} checked />
              <label htmlFor={uid + "light"}>Beleuchtung:</label>
            </span>
            <Slider id={uid + "lightv"} label="Beleuchtung" value={51} />
          </div>

          <Rule />
          <SectionHeader title="Profile">
            <SmallButton label="Profil hinzufügen">+</SmallButton>
            <SmallButton label="Profil entfernen">-</SmallButton>
          </SectionHeader>
          <ul className="-mr-px h-[85px] border border-[#828790] bg-white p-px font-['Open_Sans',sans-serif] text-[12px] leading-[17px]">
            {profiles.map((p) => (
              <li
                key={p.name}
                className={"flex h-[17px] items-center gap-[3px] pl-px " + (p.name === selected ? "bg-[#0078d7] text-white" : "")}
              >
                <Check id={uid + p.name} checked={p.checked} selected={p.name === selected} />
                <label htmlFor={uid + p.name}>{p.name}</label>
              </li>
            ))}
          </ul>

          <div className="mt-[6px] flex h-[25px] items-start justify-between pr-1 pl-1 leading-6">
            <span>{selected}</span>
            <button type="button" aria-label="Info" className="grid h-6 place-items-center"><InfoIcon /></button>
          </div>
          <dl className="grid grid-cols-[134px_1fr] leading-6 whitespace-pre">
            <dt className="pl-1">Weißpunkt:</dt>
            <dd>{white}</dd>
            <dt className="pl-1">Schwarzpunkt:</dt>
            <dd>{black}</dd>
          </dl>
          <ComboRow id={uid + "display"} label="Darstellung:" value="Oberfläche" options={["Oberfläche", "Punkte"]} />
          <ComboRow id={uid + "color"} label="Farbe:" value={color} options={["Rot", "Grün"]} />
          <ComboRow id={uid + "intent"} label="Wiedergabeart:" value="Farbmetrisch absolut" options={["Farbmetrisch absolut", "Perzeptiv"]} />
          <div className="mt-0.5 flex h-[25px] items-start">
            <span className="flex h-[22px] w-[148px] items-center gap-[3px] pl-[5px]">
              <Check id={uid + "op"} checked />
              <label htmlFor={uid + "op"}>Deckkraft:</label>
            </span>
            <Slider id={uid + "opv"} label="Deckkraft" value={opacity} />
          </div>
          <div className="mb-[3px] flex h-[25px] items-start">
            <label htmlFor={uid + "pt"} className="w-[148px] pl-1 leading-5">Punktgröße:</label>
            <Slider id={uid + "pt"} value={21} />
          </div>

          <Rule />
          <SectionHeader title="Messwerte">
            <SmallButton label="Messwert hinzufügen">+</SmallButton>
            <SmallButton label="Messwert entfernen" disabled>-</SmallButton>
          </SectionHeader>
          <div className="-mr-px h-[85px] border border-[#828790] bg-white" />

          <div className="mt-auto">
            <Rule />
            <div className="flex h-[77px] items-start gap-[9px] pl-[5px]">
              <div className="mt-[13px] grid size-[45px] place-items-center border-2 border-t-[#a0a0a0] border-r-white border-b-white border-l-[#a0a0a0]">
                <svg viewBox="0 0 34 34" className="size-[34px]">
                  <rect x=".5" y=".5" width="33" height="33" fill="#fff" stroke="#000" />
                  <path d="M1.500 32.500L32.500 1.500" stroke="#f00" strokeWidth="2" />
                </svg>
              </div>
              <div className="mt-1 font-['Open_Sans',sans-serif] leading-4">
                <p>Momentan ist kein Punkt markiert.</p>
                <p>Dargestellt:</p>
                <p>Eingabe:</p>
              </div>
            </div>
          </div>
        </aside>
      </div>

      <footer className={"flex items-end border-t border-[#d4d4d4] " + (variant === "red" ? "h-[23px]" : "h-[21px]")}>
        <div className="h-[19px] w-[49.3%] border-r border-[#dcdcdc]" />
        <div className="flex h-full flex-1 items-end justify-end pl-[10px]">
          <svg viewBox="0 0 8 8" className="mb-0.5 size-2">
            <path d="M6 0h2v2H6zM3 3h2v2H3zM6 3h2v2H6zM0 6h2v2H0zM3 6h2v2H3zM6 6h2v2H6z" fill="#bfbfbf" />
          </svg>
        </div>
      </footer>
    </section>
  );
};

export default function App() {
  return (
    <div className="grid min-h-screen grid-cols-2 gap-x-[39px] overflow-hidden bg-white">
      <InspectorWindow
        variant="red"
        profiles={[
          { name: "Adobe RGB (1998)", checked: true },
          { name: "ISO Coated v2 (ECI)", checked: true },
          { name: "DCI P3 DCI", checked: false },
        ]}
        selected="Adobe RGB (1998)"
        white="L: 100,00, a: -2,39, b: -19,40"
        black="L:  0,00, a:  0,00, b:  0,00"
        color="Rot"
        opacity={70}
      />
      <div className="-mr-px flex flex-col [&>section]:flex-1">
        <InspectorWindow
          variant="green"
          profiles={[
            { name: "Adobe RGB (1998)", checked: false },
            { name: "ISO Coated v2 (ECI)", checked: true },
            { name: "DCI P3 DCI", checked: true },
          ]}
          selected="DCI P3 DCI"
          white="L: 100,00, a: -0,00, b: -0,00"
          black="n.v."
          color="Grün"
          opacity={40}
        />
      </div>
    </div>
  );
}
